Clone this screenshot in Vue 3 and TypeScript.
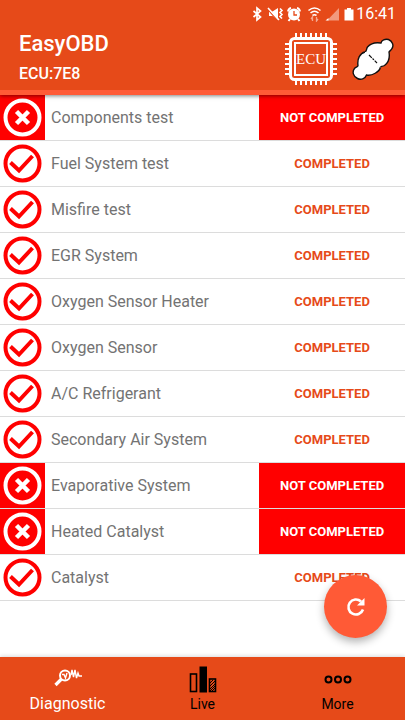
<script setup lang="ts">
import { ref } from 'vue'

interface Monitor {
  name: string
  completed: boolean
}

const monitors = ref<Monitor[]>([
  { name: 'Components test', completed: false },
  { name: 'Fuel System test', completed: true },
  { name: 'Misfire test', completed: true },
  { name: 'EGR System', completed: true },
  { name: 'Oxygen Sensor Heater', completed: true },
  { name: 'Oxygen Sensor', completed: true },
  { name: 'A/C Refrigerant', completed: true },
  { name: 'Secondary Air System', completed: true },
  { name: 'Evaporative System', completed: false },
  { name: 'Heated Catalyst', completed: false },
  { name: 'Catalyst', completed: true },
])
</script>

<template>
  <div class="app">
    <header class="top">
      <div class="status-bar">
        <svg class="status-icons" width="104" height="16" viewBox="0 0 104 16" aria-hidden="true">
          <path d="M1.500 5 8.500 11 5 14V2L8.500 5 1.500 11" fill="none" stroke="#fff" stroke-width="1.700" />
          <path d="M17 5.500h3.500L26 2v12l-5.500-4H17z" fill="#fff" />
          <path d="M16 3.500 26 15" stroke="#e64a19" stroke-width="1.200" />
          <path d="M16 2 27 14M28 2.500l2 2-2 2 2 2-2 2 2 2" fill="none" stroke="#fff" stroke-width="1.600" />
          <circle cx="42" cy="8.500" r="6" fill="#fff" />
          <path
            d="M36 5.500q.5-3 3-3.500M48 5.500q-.5-3-3-3.500M38 13l-1.500 2M46 13l1.500 2"
            fill="none"
            stroke="#fff"
            stroke-width="2"
          />
          <path d="M42 5v4h3" fill="none" stroke="#e64a19" stroke-width="1.300" />
          <g fill="none" stroke="#fff" stroke-width="1.600">
            <path d="M56.500 4.500q6-5 12 0" />
            <path d="M58.500 7q4-3.500 8 0" />
            <path d="M60.500 9.500q2-1.500 4 0" />
          </g>
          <path d="M60.500 15v-4l-1.500 2M64.500 11v4l1.500-2" fill="none" stroke="#f4a78f" stroke-width="1.300" />
          <path d="M75 14.500 87 2v12.500z" fill="#f29a7e" />
          <path d="M73.500 14.500 76.500 12v2.500z" fill="#fff" />
          <path d="M92.500 3.500H95V2h4v1.500h2.500v11h-9z" fill="#fff" />
        </svg>
        <span class="clock">16:41</span>
      </div>
      <div class="toolbar">
        <div class="titles">
          <h1>EasyOBD</h1>
          <p>ECU:7E8</p>
        </div>
        <div class="actions">
          <button type="button" aria-label="Select ECU">
            <svg width="52" height="52" viewBox="0 0 52 52">
              <g fill="none" stroke="#fff">
                <rect x="5.500" y="5.500" width="41" height="41" rx="4" stroke-width="3" />
                <rect x="10" y="10" width="32" height="32" stroke-width="2" />
                <path
                  stroke-width="2"
                  d="M11 0v5M16 0v5M21 0v5M26 0v5M31 0v5M36 0v5M41 0v5M11 47v5M16 47v5M21 47v5M26 47v5M31 47v5M36 47v5M41 47v5M0 11h5M0 16h5M0 21h5M0 26h5M0 31h5M0 36h5M0 41h5M47 11h5M47 16h5M47 21h5M47 26h5M47 31h5M47 36h5M47 41h5"
                />
              </g>
              <text class="chip-text" x="26" y="31" text-anchor="middle">ECU</text>
            </svg>
          </button>
          <button type="button" aria-label="Connection">
            <svg width="42" height="42" viewBox="0 0 42 42">
              <path
                d="M13 14C15 13 14 11 15.500 9C18.500 5.500 23 4 29 5C29.500 2 33 0.700 36.500 1.500C40.500 3 42 7.500 40 10.500C39 12.500 37.500 13 37 14C38 20 36 25 32.500 27.500C30.500 28.800 29 28 28.500 29C27.500 34 20 38 14.500 37C13 41 9 42.200 5.500 40.500C1 38.500 0 33.500 2.500 30.500C3.500 29 6 29 6 27.500C5 21 8 15 13 14Z"
                fill="#fff"
                stroke="#111"
                stroke-width="1.400"
              />
              <path d="m13 14 15.500 15" stroke="#fff" stroke-width="1" />
              <path d="m17 17 8 8" stroke="#111" stroke-width="1.200" stroke-dasharray="4 1 2 1" />
            </svg>
          </button>
        </div>
      </div>
    </header>

    <main>
      <table aria-label="Monitor status">
        <tbody>
          <tr v-for="m in monitors" :key="m.name" :class="{ failed: !m.completed }">
            <td class="mark">
              <svg width="39" height="39" viewBox="0 0 39 39" aria-hidden="true">
                <circle cx="19.500" cy="19.500" r="17" fill="none" stroke="currentColor" stroke-width="4" />
                <path
                  v-if="m.completed"
                  d="m7.500 18.500 8.500 8L29.500 12"
                  fill="none"
                  stroke="currentColor"
                  stroke-width="4"
                />
                <path v-else d="m13.500 13.500 12 12m0-12-12 12" stroke="currentColor" stroke-width="4.500" />
              </svg>
            </td>
            <th scope="row">{{ m.name }}</th>
            <td class="state">{{ m.completed ? 'COMPLETED' : 'NOT COMPLETED' }}</td>
          </tr>
        </tbody>
      </table>
    </main>

    <button type="button" class="refresh" aria-label="Refresh">
      <svg width="20" height="20" viewBox="0 0 20 20">
        <path d="M17 12.500A7.500 7.500 0 1 1 15 4.500" fill="none" stroke="#fff" stroke-width="2.600" />
        <path d="M18.500 1v7.500H11z" fill="#fff" />
      </svg>
    </button>

    <nav class="tabs" aria-label="Main">
      <a href="#diagnostic" class="active" aria-current="page">
        <svg width="28" height="28" viewBox="0 0 28 28">
          <circle cx="11" cy="10.500" r="5" fill="none" stroke="#fff" stroke-width="2" />
          <path d="m7.500 14-6 6" stroke="#fff" stroke-width="3.200" />
          <path
            d="M8 9.500h2l1.500 3.500 1.500-5M17 10l1-5 1.500 7L21 5l1.500 8L24 8l1 3h3"
            fill="none"
            stroke="#fff"
            stroke-width="1.400"
          />
        </svg>
        <span>Diagnostic</span>
      </a>
      <a href="#live">
        <svg width="28" height="28" viewBox="0 0 28 28">
          <rect x="1.500" y="9" width="6" height="17.500" fill="none" stroke="#000" stroke-width="1.600" />
          <path d="M10.500 1.500H18v26h-7.500z" />
          <rect x="20.500" y="14" width="6" height="12.500" fill="none" stroke="#000" stroke-width="1.600" />
          <path d="m21 18 3-3m-3 6 5-5m-5 8 5-5m-5 7 5-5m-3 5 3-3" stroke="#000" stroke-width="1" />
        </svg>
        <span>Live</span>
      </a>
      <a href="#more">
        <svg width="28" height="28" viewBox="0 0 28 28">
          <g fill="none" stroke="#000" stroke-width="2">
            <circle cx="4.500" cy="14.500" r="3" />
            <circle cx="14" cy="14.500" r="3" />
            <circle cx="23.500" cy="14.500" r="3" />
          </g>
        </svg>
        <span>More</span>
      </a>
    </nav>
  </div>
</template>

<style>
body {
  background: #fff;
}
</style>

<style scoped>
.app {
  min-height: 100vh;
  display: flex;
  flex-direction: column;
  font-family: Roboto, "Liberation Sans", sans-serif;
}
.top {
  position: relative;
  background: #e64a19;
  color: #fff;
  border-bottom: 5px solid #ff5a36;
  box-shadow: 0 1px 4px rgba(0, 0, 0, 0.5);
}
.status-bar {
  display: flex;
  justify-content: flex-end;
  align-items: center;
  height: 28px;
  padding-right: 9px;
}
.clock {
  font-size: 16px;
  line-height: 28px;
}
.toolbar {
  display: flex;
  justify-content: space-between;
  height: 62px;
  padding: 0 11px 0 19px;
}
h1,
p {
  margin: 0;
  font-weight: 500;
}
h1 {
  font-size: 22px;
  line-height: 32px;
}
p {
  font-size: 16px;
  line-height: 28px;
}
.actions {
  display: flex;
  align-items: center;
  gap: 15px;
}
button {
  display: flex;
  align-items: center;
  justify-content: center;
  padding: 0;
  border: 0;
  background: none;
}
.chip-text {
  font-family: "Liberation Serif", serif;
  font-size: 15px;
  fill: #fff;
}
main {
  flex: 1;
}
table {
  width: 100%;
  table-layout: fixed;
  border-collapse: separate;
  border-spacing: 0;
}
td,
th {
  box-sizing: border-box;
  height: 46px;
  padding: 0;
  border-bottom: 1px solid #dcdcdc;
  vertical-align: middle;
}
.mark {
  width: 45px;
  color: #f00;
}
.mark svg {
  display: block;
  margin: 0 auto;
}
th {
  padding-left: 6px;
  text-align: left;
  font-size: 16px;
  font-weight: 400;
  color: #737373;
}
.state {
  width: 36%;
  text-align: center;
  font-size: 13px;
  font-weight: 700;
  color: #e64a19;
}
.failed .mark,
.failed .state {
  background: #f00;
  background-clip: padding-box;
  color: #fff;
}
.refresh {
  position: fixed;
  right: 18px;
  bottom: 82px;
  width: 63px;
  height: 63px;
  border-radius: 50%;
  background: #ff5a36;
  box-shadow: 0 4px 9px rgba(0, 0, 0, 0.3);
}
.tabs {
  display: grid;
  grid-template-columns: repeat(3, 1fr);
  height: 63px;
  background: #e64a19;
  box-shadow: 0 -1px 4px rgba(0, 0, 0, 0.15);
}
.tabs a {
  display: flex;
  flex-direction: column;
  align-items: center;
  padding-top: 8px;
  color: #000;
  font-size: 14px;
  line-height: 22px;
  text-decoration: none;
}
.tabs .active {
  color: #fff;
  font-size: 16px;
}
</style>
